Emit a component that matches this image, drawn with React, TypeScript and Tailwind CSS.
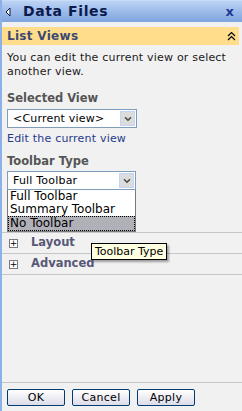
import { ChevronDown } from "lucide-react";

const font = { fontFamily: '"DejaVu Sans", Verdana, sans-serif' };

function FakeSelect({ value, width }: { value: string; width: string }) {
  return (
    <div className={`flex h-[19px] border border-[#7f9db9] bg-white ${width}`}>
      <div className="flex-1 pl-[5px] text-[11px] leading-[17px] tracking-[0.2px] text-black">{value}</div>
      <div className="m-[1px] flex w-[15px] items-center justify-center border border-[#c3d3fd] bg-[#dcdcdc]">
        <ChevronDown size={10} strokeWidth={4} className="text-[#4d4d4d]" />
      </div>
    </div>
  );
}

function Section({ label }: { label: string }) {
  return (
    <div className="flex h-[21px] items-center border-b border-[#c6c6c6] pl-[7px]">
      <span className="flex h-[9px] w-[9px] items-center justify-center border border-[#7a7a7a] bg-white text-[9px] leading-none text-black">
        +
      </span>
      <span className="ml-[13px] text-[11.5px] font-bold text-[#585877]">{label}</span>
    </div>
  );
}

export default function App() {
  return (
    <div style={font} className="relative flex h-[411px] w-[242px] flex-col border-l-2 border-[#8cb0e8] bg-[#f1f1f1]">
      <div className="flex h-[22px] items-center border-t border-[#c9dbf6] bg-gradient-to-b from-[#bcd3f4] to-[#7fa4df] pl-[3px] pr-[8px]">
        <svg width="6" height="10" viewBox="0 0 6 10" className="mr-[12px]">
          <path d="M5 1 L1 5 L5 9 Z" fill="#ffffff" stroke="#0b1a4a" strokeWidth="1" />
        </svg>
        <span className="flex-1 text-[14px] font-bold tracking-[0.6px] text-[#0b1b4c]">Data Files</span>
        <span className="text-[13px] font-bold text-[#1c3a94]">x</span>
      </div>
      <div className="mt-[5px] mr-[3px] flex h-[18px] items-center bg-[#ffdd8a] pl-[5px] pr-[3px]">
        <span className="flex-1 text-[12px] font-bold tracking-[0.3px] text-[#3b4a73]">List Views</span>
        <svg width="9" height="10" viewBox="0 0 9 10">
          <path d="M1 5 L4.5 1.5 L8 5 M1 9 L4.5 5.5 L8 9" fill="none" stroke="#000" strokeWidth="1.2" />
        </svg>
      </div>
      <div className="px-[5px] pt-[6px]">
        <p className="text-[11px] leading-[14px] tracking-[0.2px] text-[#1a1a1a]">
          You can edit the current view or select another view.
        </p>
        <div className="mt-[12px] text-[11.5px] font-bold leading-[14px] text-[#555555]">Selected View</div>
        <div className="mt-[4px]">
          <FakeSelect value="<Current view>" width="w-[130px]" />
        </div>
        <div className="mt-[4px] text-[11px] leading-[13px] tracking-[0.2px] text-[#1f3b8c]">Edit the current view</div>
        <div className="mt-[9px] text-[11.5px] font-bold leading-[14px] text-[#555555]">Toolbar Type</div>
        <div className="mt-[3px]">
          <FakeSelect value="Full Toolbar" width="w-[129px]" />
          <div className="w-[129px] border border-t-0 border-[#7a7a7a] bg-white text-[12px] leading-[13px] text-black">
            <div className="pl-[2px]">Full Toolbar</div>
            <div className="pl-[2px]">Summary Toolbar</div>
            <div className="border border-dotted border-black bg-[#b0b0b8] pl-[1px] leading-[13px]">No Toolbar</div>
          </div>
        </div>
      </div>
      <div className="border-b border-[#c6c6c6]" />
      <Section label="Layout" />
      <Section label="Advanced" />
      <div className="flex-1" />
      <div className="flex gap-[7px] border-t border-[#c6c6c6] px-[5px] pb-[5px] pt-[6px]">
        {["OK", "Cancel", "Apply"].map((b) => (
          <button
            key={b}
            className="h-[17px] w-[58px] rounded-[2px] border border-[#003c74] bg-gradient-to-b from-[#ffffff] to-[#dcdcea] text-[11px] leading-none tracking-[0.3px] text-black"
          >
            {b}
          </button>
        ))}
      </div>
      <div className="absolute left-[89px] top-[243px] border border-black bg-[#ffffe1] px-[3px] text-[11px] leading-[15px] text-black shadow-[2px_2px_2px_rgba(0,0,0,0.35)]">
        Toolbar Type
      </div>
    </div>
  );
}
